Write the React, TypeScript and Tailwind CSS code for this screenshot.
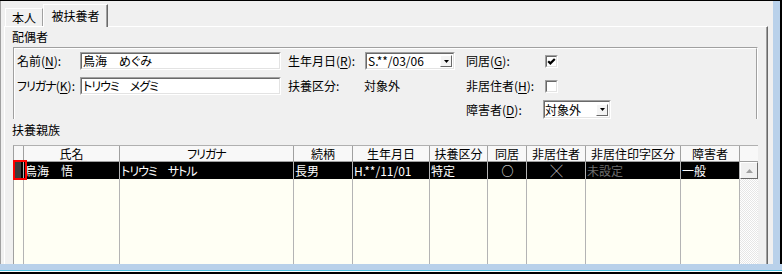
import type { ReactNode } from "react";

type Col = {
  w: string;
  head: ReactNode;
  cell: ReactNode;
  align?: "center";
  dim?: boolean;
};

const columns: Col[] = [
  { w: "w-[96px]", head: "氏名", cell: "鳥海　悟" },
  {
    w: "w-[174px]",
    head: <span className="tracking-[-1px]">フリガナ</span>,
    cell: <span className="tracking-[-1px]">トリウミ　サトル</span>
  },
  { w: "w-[59px]", head: "続柄", cell: "長男" },
  { w: "w-[77px]", head: "生年月日", cell: "H.**/11/01" },
  { w: "w-[58px]", head: "扶養区分", cell: "特定" },
  { w: "w-[39px]", head: "同居", cell: "○", align: "center" },
  { w: "w-[59px]", head: "非居住者", cell: "╳", align: "center" },
  { w: "w-[95px]", head: "非居住印字区分", cell: "未設定", dim: true },
  { w: "w-[59px]", head: "障害者", cell: "一般" }
];

function Key({ k }: { k: string }) {
  return <span className="underline underline-offset-2">{k}</span>;
}

function Sunken({ className, children }: { className: string; children?: ReactNode }) {
  return (
    <div className={`shrink-0 border border-t-[#a0a0a0] border-l-[#a0a0a0] border-r-white border-b-white ${className}`}>
      <div className="flex h-full items-center border border-t-[#696969] border-l-[#696969] border-r-[#e3e3e3] border-b-[#e3e3e3] bg-white">
        {children}
      </div>
    </div>
  );
}

function DropButton() {
  return (
    <div className="mr-px flex h-[12px] w-[12px] items-center justify-center border border-t-white border-l-white border-r-[#696969] border-b-[#696969] bg-[#f4f4f4]">
      <svg width="5" height="3" viewBox="0 0 5 3">
        <path d="M0 0h5L2.5 3z" fill="#000" />
      </svg>
    </div>
  );
}

function CheckBox({ checked }: { checked?: boolean }) {
  return (
    <div className="h-[13px] w-[13px] border border-t-[#a0a0a0] border-l-[#a0a0a0] border-r-white border-b-white">
      <div className="flex h-full w-full items-center justify-center border border-t-[#696969] border-l-[#696969] border-r-[#e3e3e3] border-b-[#e3e3e3] bg-white">
        {checked ? (
          <svg width="9" height="9" viewBox="0 0 9 9">
            <polyline points="1.2,4.2 3.4,6.4 7.8,2" fill="none" stroke="#000" strokeWidth="2.2" />
          </svg>
        ) : null}
      </div>
    </div>
  );
}

function Grid() {
  return (
    <div className="relative ml-px flex h-[120px] w-[745px] border-t border-l border-t-[#b0b0b0] border-l-[#a0a0a0]">
      {/* row header */}
      <div className="flex w-[10px] flex-col">
        <div className="h-[16px] border-r border-b border-[#a0a0a0] bg-[#f8f8f8]" />
        <div className="h-[17px] border-r border-[#b4b4b4] bg-black">
          <div className="ml-[1px] h-full w-[6px] bg-[#3c3c3c]" />
        </div>
        <div className="flex-1 border-r border-[#b4b4b4] bg-[#fffff4]" />
      </div>

      {columns.map((col, i) => (
        <div className={`flex flex-col ${col.w}`} key={i}>
          <div className="h-[16px] border-r border-b border-[#a0a0a0] bg-[#f8f8f8] text-center leading-[15px] whitespace-nowrap">
            {col.head}
          </div>
          <div
            className={`h-[17px] overflow-hidden border-r border-[#b4b4b4] bg-black pl-[1px] leading-[17px] whitespace-nowrap ${
              col.align === "center" ? "text-center" : ""
            } ${col.dim ? "text-[#6d6d6d]" : "text-white"}`}
          >
            {col.cell}
          </div>
          <div className="flex-1 border-r border-[#b4b4b4] bg-[#fffff4]" />
        </div>
      ))}

      {/* scroll bar */}
      <div className="flex w-[18px] flex-col">
        <div className="h-[16px] border-b border-[#a0a0a0] bg-[#f8f8f8]" />
        <div className="flex h-[17px] items-center justify-center border border-t-white border-l-white border-r-[#696969] border-b-[#696969] bg-[#f0f0f0]">
          <svg width="7" height="4" viewBox="0 0 7 4">
            <path d="M3.5 0L7 4H0z" fill="#a0a0a0" />
          </svg>
        </div>
        <div className="flex-1 bg-[repeating-conic-gradient(#e6e6e6_0%_25%,#ffffff_0%_50%)] bg-[length:2px_2px]" />
      </div>

      <div className="absolute -left-px top-[14px] h-[20px] w-[14px] border-2 border-[#ff0000]" />
    </div>
  );
}

export default function App() {
  return (
    <div className="flex h-[274px] w-[782px] flex-col overflow-hidden border-t border-black bg-[#f0f0f0] font-['Noto_Sans_CJK_JP','Liberation_Sans',sans-serif] text-[12px] leading-[14px] text-black [font-feature-settings:'palt']">
      <div className="flex min-h-0 flex-1">
        <div className="flex min-w-0 flex-1 flex-col overflow-hidden border-l border-[#a0a0a0] pl-[3px] pt-[3px]">
          {/* tabs */}
          <div className="relative z-10 flex h-[22px]">
            <div className="ml-px h-[18px] w-[38px] self-end border-t border-l border-white border-r border-r-[#a0a0a0] pt-[2px] text-center">
              本人
            </div>
            <div className="h-[23px] w-[65px] self-start border-t border-l border-white border-r border-r-[#696969] bg-[#f0f0f0] pt-[4px] text-center shadow-[inset_-1px_0_0_#a0a0a0]">
              被扶養者
            </div>
          </div>

          {/* panel */}
          <div className="flex w-[764px] flex-1 flex-col overflow-hidden border-t border-l border-white border-r border-r-[#696969] pl-[7px] pt-[3px] shadow-[inset_-1px_0_0_#a0a0a0]">
            <p className="h-[14px]">配偶者</p>

            <div className="mt-[3px] ml-px h-[76px] w-[745px] border-t border-l border-r border-t-[#a0a0a0] border-l-[#a0a0a0] border-r-white">
              <div className="h-full border-t border-l border-white border-r border-r-[#a0a0a0] pl-[2px] pt-[3px]">
                <div className="flex h-[18px] items-center whitespace-nowrap">
                  <span className="w-[63px] shrink-0">名前(<Key k="N" />):</span>
                  <Sunken className="h-[18px] w-[201px]">
                    <span className="pl-px">鳥海　めぐみ</span>
                  </Sunken>
                  <span className="ml-[7px] w-[77px] shrink-0">生年月日(<Key k="R" />):</span>
                  <Sunken className="h-[18px] w-[90px]">
                    <span className="flex-1 pl-px">S.**/03/06</span>
                    <DropButton />
                  </Sunken>
                  <span className="ml-[11px] w-[79px] shrink-0">同居(<Key k="G" />):</span>
                  <CheckBox checked />
                </div>

                <div className="mt-[7px] flex h-[18px] items-center whitespace-nowrap">
                  <span className="w-[63px] shrink-0">
                    <span className="tracking-[-1px]">フリガナ</span>(<Key k="K" />):
                  </span>
                  <Sunken className="h-[18px] w-[201px]">
                    <span className="pl-px tracking-[-1px]">トリウミ　メグミ</span>
                  </Sunken>
                  <span className="ml-[7px] w-[76px] shrink-0">扶養区分:</span>
                  <span className="w-[91px] shrink-0">対象外</span>
                  <span className="ml-[11px] w-[79px] shrink-0">非居住者(<Key k="H" />):</span>
                  <CheckBox />
                </div>

                <div className="mt-[5px] flex h-[19px] items-center whitespace-nowrap">
                  <span className="ml-[449px] w-[77px] shrink-0">障害者(<Key k="D" />):</span>
                  <Sunken className="h-[19px] w-[68px]">
                    <span className="flex-1">対象外</span>
                    <DropButton />
                  </Sunken>
                </div>
              </div>
            </div>

            <p className="mt-[4px] h-[14px]">扶養親族</p>
            <div className="mt-[8px]">
              <Grid />
            </div>
          </div>
        </div>
        <div className="w-[9px] border-r-2 border-black bg-[#b9d1ea]" />
      </div>

      <div className="flex h-[10px] flex-col">
        <div className="h-[6px] bg-[#b9d1ea]" />
        <div className="h-px bg-[#4fc1e0]" />
        <div className="h-px bg-white" />
        <div className="h-[2px] bg-black" />
      </div>
    </div>
  );
}
